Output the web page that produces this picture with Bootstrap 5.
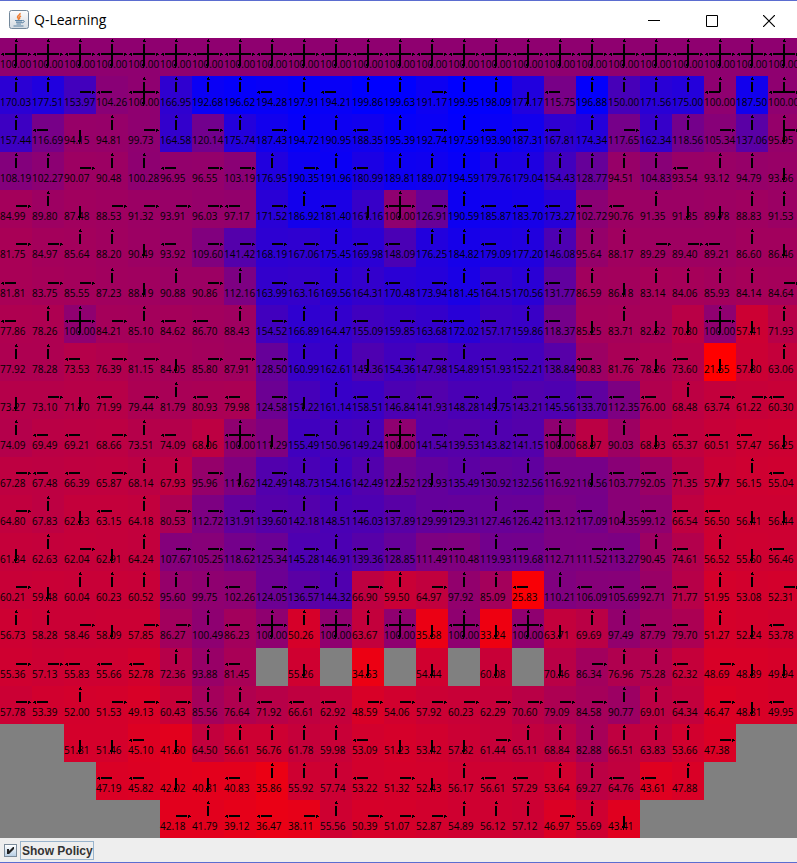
<!DOCTYPE html>
<html lang="en">
<head>
<meta charset="utf-8">
<meta name="viewport" content="width=device-width, initial-scale=1">
<title>Q-Learning</title>
<link href="https://cdn.jsdelivr.net/npm/bootstrap@5.3.0/dist/css/bootstrap.min.css" rel="stylesheet">
<style>
  .app-window { border-top: 1px solid #5b6dd0; border-bottom: 1px solid #5b6dd0; background: #fff; }
  .title-bar { height: 37px; padding-left: 9px; }
  .title-text { font: 14px/20px "Open Sans", "Noto Sans", sans-serif; color: #000; margin: 0 0 0 5px; }
  .win-btn { width: 58px; border: 0; background: transparent; color: #000; }
  .win-btn:last-child { width: 56px; }
  .world-view { overflow: hidden; min-height: 0; background: #808080; }
  .world { display: grid; grid-template-columns: repeat(25, 1fr); grid-template-rows: repeat(21, 1fr); margin-right: -3px; }
  .state { position: relative; min-width: 0; min-height: 0; white-space: nowrap; padding-top: 20px;
    font: 10px/12px "Open Sans", "Noto Sans", sans-serif; color: #000; }
  .state svg { position: absolute; left: 0; top: 0; width: 32px; height: 38px; }
  .wall { background: #808080; }
  .status-bar { height: 24px; background: #eee; padding-left: 4px; }
  .policy-box { appearance: none; width: 13px; height: 13px; margin: 0 3px 0 0; border: 1px solid #7a8a99;
    background: linear-gradient(#fff, #b8cfe5); }
  .policy-box:checked { background: url("data:image/svg+xml,%3Csvg xmlns='http://www.w3.org/2000/svg' viewBox='0 0 11 11'%3E%3Cpath d='M2 4h2v2L8 2h1v2L4 9H2z' fill='%23222'/%3E%3C/svg%3E"), linear-gradient(#fff, #b8cfe5); }
  .policy-label { font: bold 12px/16px "Liberation Sans", Arial, sans-serif; color: #333; border: 1px solid #99b4cc; padding: 1px 0 0 1px; }
</style>
<script src="https://cdn.jsdelivr.net/npm/bootstrap@5.3.0/dist/js/bootstrap.bundle.min.js"></script>
</head>
<body>
<svg width="0" height="0" class="position-absolute" aria-hidden="true">
  <defs>
    <g id="U"><path d="M15 6h2v10h-2zM16 1h1v2h1v1h-3v-2h1z"/></g>
    <g id="D"><path d="M15 16h2v10h-2zM14 26h3v2h-1v2h-1v-2h-1z"/></g>
    <g id="L"><path d="M5 15h11v2H5zM1 16h1v-1h2v3h-1v-1h-2z"/></g>
    <g id="R"><path d="M16 15h11v2H16zM28 15h2v1h1v1h-2v1h-1z"/></g>
  </defs>
</svg>
<div class="app-window vh-100 d-flex flex-column">
  <header class="title-bar d-flex align-items-center flex-shrink-0">
    <svg width="20" height="20" viewBox="0 0 20 20" aria-hidden="true">
      <defs><linearGradient id="frame" x1="0" y1="0" x2="0" y2="1"><stop offset="0" stop-color="#fdfdfd"/><stop offset="1" stop-color="#d3dae1"/></linearGradient></defs>
      <rect x=".5" y=".5" width="19" height="18" rx="2" fill="url(#frame)" stroke="#73889b"/>
      <path d="M11 3c1 2-4 3-2 5 .8 1 1 1.500.3 2.500M12 6c-2 1-2 2-1 3" fill="none" stroke="#ee7f35" stroke-width="1.500"/>
      <path d="M6 10.500h7.500M7 12.200h6M7.500 14h4.500M4.500 16h10" fill="none" stroke="#5a81a3" stroke-width="1.200"/>
      <path d="M13.500 10.500c2.500-.5 2.500 2-.8 2.500" fill="none" stroke="#5a81a3"/>
    </svg>
    <h1 class="title-text">Q-Learning</h1>
    <div class="ms-auto d-flex align-self-stretch">
      <button class="win-btn p-0" type="button" aria-label="Minimize"><svg width="12" height="12" viewBox="0 0 12 12" shape-rendering="crispEdges"><path d="M0 5h12v1H0z"/></svg></button>
      <button class="win-btn p-0" type="button" aria-label="Maximize"><svg width="12" height="12" viewBox="0 0 12 12"><path d="M.5 .5h11v11H.5z" fill="none" stroke="#000"/></svg></button>
      <button class="win-btn p-0" type="button" aria-label="Close"><svg width="12" height="12" viewBox="0 0 12 12"><path d="M0 0l12 12M12 0L0 12" stroke="#000" stroke-width="1.200"/></svg></button>
    </div>
  </header>
  <main class="world-view flex-grow-1 d-flex">
    <div class="world flex-grow-1" id="world"></div>
  </main>
  <footer class="status-bar d-flex align-items-center flex-shrink-0">
    <input class="policy-box" type="checkbox" id="policy" checked>
    <label class="policy-label" for="policy">Show Policy</label>
  </footer>
</div>
<script>
  // One line per grid row: value plus greedy directions; "*" means all four, "#n" means n blocked cells.
  const rows = `
100.00* 100.00* 100.00* 100.00* 100.00* 100.00* 100.00* 100.00* 100.00* 100.00* 100.00* 100.00* 100.00* 100.00* 100.00* 100.00* 100.00* 100.00* 100.00* 100.00* 100.00* 100.00* 100.00* 100.00* 100.00*
170.03U 177.51U 153.97R 104.26L 100.00* 166.95U 192.68U 196.62U 194.28L 197.91U 194.21L 199.86U 199.63U 191.17R 199.95U 198.09U 177.17D 115.75L 196.88U 150.00U 171.56U 175.00U 100.00UL 187.50U 100.00ULR
157.44U 116.69L 94.15D 94.81U 99.73R 164.58U 120.14R 175.74U 187.43R 194.72U 190.95U 188.35L 195.39U 192.74R 197.59U 193.90L 187.31L 167.81L 174.34U 117.65R 162.34U 118.56U 105.34R 137.06U 95.95UDR
108.19U 102.27U 90.07R 90.48U 100.28U 96.95L 96.55R 103.19R 176.95U 190.35R 191.96U 180.99L 189.81U 189.07U 194.59U 179.76U 179.04U 154.43U 128.77U 94.51U 104.83U 93.54L 93.12U 94.79U 93.56D
84.99R 89.80U 87.48D 88.53R 91.32R 93.91R 96.03R 97.17L 171.52R 186.92U 181.40L 161.16D 100.00* 126.91R 190.59U 185.87L 183.70L 173.27L 102.72L 90.76L 91.35U 91.85D 89.78D 88.83U 91.53U
81.75R 84.97R 85.64U 88.20U 90.49D 93.92L 109.60R 141.42R 168.19R 167.06R 175.45U 169.98L 148.09L 176.25U 184.82U 179.09L 177.20U 146.08U 95.64U 88.17U 89.29R 89.40R 89.21L 86.60U 86.46D
81.81L 83.75R 85.55R 87.23U 88.19D 90.88U 90.86R 112.16U 163.99R 163.16R 169.56U 164.31U 170.48L 173.94R 181.45U 164.15L 170.56U 131.77L 86.59U 86.18D 83.14U 84.06U 85.93U 84.14U 84.64R
77.86L 78.26U 100.00* 84.21R 85.10U 84.62L 86.70L 88.43U 154.52R 166.89U 164.47U 155.09L 159.85R 163.68R 172.02L 157.17L 159.86U 118.37L 85.25D 83.71U 82.52D 70.80D 100.00* 57.41D 71.93U
77.92U 78.28U 73.53L 76.39R 81.15R 84.05D 85.80R 87.91R 128.50R 160.99U 162.61U 145.36D 154.36R 147.98R 154.89U 151.93L 152.21L 138.84L 90.83L 81.76R 78.26D 73.60L 21.55D 57.80D 63.06U
73.27D 73.10R 71.70D 71.99L 79.44R 81.79U 80.93L 79.98L 124.58R 151.22D 161.14U 158.51L 146.84L 141.93L 148.28R 149.75D 143.21L 145.56L 133.70L 112.35L 76.00L 68.48U 63.74R 61.22R 60.30L
74.09U 69.49L 69.21L 68.66R 73.51U 74.09L 68.06D 100.00* 111.29D 155.49R 150.96U 149.24U 100.00* 141.54R 139.53R 143.82U 141.15L 100.00* 68.97D 90.03U 68.93D 65.37L 60.51L 57.47L 56.25D
67.28R 67.48L 66.39L 65.87R 68.14U 67.93U 95.96R 111.62D 142.49R 148.73U 154.16U 142.49U 122.52D 129.93D 135.49U 130.92L 132.56U 116.92L 116.56D 103.77L 92.05L 71.35L 57.77D 56.15U 55.04L
64.80R 67.83U 62.63D 63.15L 64.18U 80.53R 112.72R 131.91R 139.60R 142.18U 148.51U 146.03L 137.89L 129.99R 129.31L 127.46U 126.42L 113.12L 117.09L 104.35D 99.12L 66.54L 56.50L 56.41D 56.44D
61.84D 62.63U 62.04R 62.91D 64.24U 107.67R 105.25R 118.62R 125.34R 145.28R 146.91U 139.36L 128.85L 111.49R 110.48L 119.93U 119.68L 112.71L 111.52R 113.27L 90.45U 74.61L 56.52U 55.60D 56.46L
60.21R 59.48D 60.04U 60.23U 60.52U 95.60U 99.75U 102.26L 124.05R 136.57R 144.32U 66.90R 59.50U 64.97R 97.92U 85.09U 25.83L 110.21U 106.09L 105.69L 92.71L 71.77L 51.95U 53.08U 52.31R
56.73U 58.28U 58.46R 58.09D 57.85R 86.27R 100.49U 86.23L 100.00* 50.26U 100.00* 63.67U 100.00* 35.58D 100.00* 33.24D 100.00* 63.71D 69.69U 97.49U 87.79L 79.70L 51.27U 52.24D 53.78L
55.36R 57.13R 55.83L 55.66L 52.78L 72.36U 93.88U 81.45L #1 55.26D #1 34.53D #1 54.44D #1 60.08D #1 70.46D 86.34R 76.96U 75.28U 62.32L 48.69R 48.89D 49.94D
57.78R 53.39L 52.00U 51.53R 49.13R 60.43R 85.56U 76.64U 71.92L 66.61L 62.92L 48.59R 54.06R 57.92R 60.23R 62.29R 70.60R 79.09R 84.58R 90.77U 69.01U 64.34L 46.47R 48.81D 49.95L
#2 51.81D 51.46D 45.10L 41.60D 64.50U 56.61U 56.76U 61.78U 59.98U 53.09L 51.23D 53.42D 57.82D 61.44R 65.11U 68.84U 82.88U 66.51U 63.83U 53.66U 47.38R #2
#3 47.19L 45.82L 42.02D 40.81D 40.83L 35.86U 55.92U 57.74U 53.22L 51.32R 52.43D 56.17U 56.61L 57.29L 53.64U 69.27U 64.76L 43.61L 47.88U #3
#5 42.18R 41.79U 39.12L 36.47L 38.11R 55.56U 50.39R 51.07R 52.87R 54.89U 56.12U 57.12U 46.97R 55.69U 43.41D #5`;

  const low = 21.55, high = 199.95;
  let html = '';
  for (const item of rows.trim().split(/\s+/)) {
    if (item[0] === '#') {
      html += '<div class="wall"></div>'.repeat(+item.slice(1));
      continue;
    }
    const [, value, dirs] = item.match(/^([\d.]+)(.*)$/);
    const t = Math.min(1, Math.max(0, (value - low) / (high - low)));
    const color = `rgb(${Math.round(255 * (1 - t))},0,${Math.round(255 * t)})`;
    const arrows = (dirs === '*' ? 'UDLR' : dirs).split('').map(d => `<use href="#${d}"/>`).join('');
    html += `<div class="state" style="background:${color}">${value}<svg viewBox="0 0 32 38" shape-rendering="crispEdges" aria-hidden="true">${arrows}</svg></div>`;
  }
  document.getElementById('world').innerHTML = html;
</script>
</body>
</html>
